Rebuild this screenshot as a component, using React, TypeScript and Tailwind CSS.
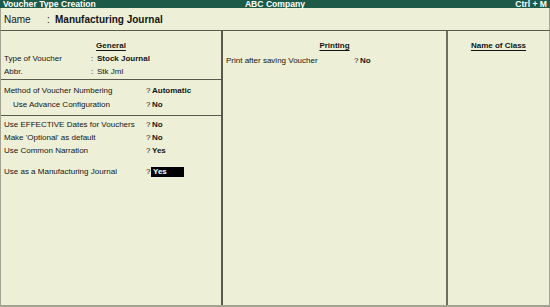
import React from 'react';

const font = { fontFamily: '"Liberation Sans", Arial, sans-serif' };

function Row({
  label,
  sep,
  value,
  bold = false,
  labelW = 'w-[145px]',
  indent = false,
  highlight = false,
  className = '',
}: {
  label: string;
  sep: string;
  value: string;
  bold?: boolean;
  labelW?: string;
  indent?: boolean;
  highlight?: boolean;
  className?: string;
}) {
  return (
    <div className={`flex h-[13px] items-center text-[8px] leading-[13px] text-[#141414] ${className}`}>
      <span className={`${labelW} shrink-0 ${indent ? 'pl-[12px]' : 'pl-[3px]'}`}>{label}</span>
      <span className="w-[6px] shrink-0">{sep}</span>
      {highlight ? (
        <span className="-ml-[1px] flex h-[10px] w-[33px] items-center bg-black pl-[2px] font-bold leading-[10px] text-white">
          {value}
        </span>
      ) : (
        <span className={bold ? 'font-bold' : ''}>{value}</span>
      )}
    </div>
  );
}

function Heading({ children }: { children: React.ReactNode }) {
  return (
    <div className="mt-[8px] flex h-[13px] items-center justify-center text-[8px] font-bold leading-[13px] text-[#141414]">
      <span className="underline decoration-1 underline-offset-[2px]">{children}</span>
    </div>
  );
}

export default function App() {
  return (
    <div style={font} className="flex h-[307px] w-[550px] flex-col overflow-hidden bg-[#edf0d6]">
      {/* Title bar */}
      <div className="flex h-[8px] items-center justify-between bg-[#1d5a48] px-[3px] text-[8.6px] font-bold leading-[8px] text-white">
        <span className="w-[150px]">Voucher Type Creation</span>
        <span>ABC Company</span>
        <span className="w-[150px] text-right">Ctrl + M</span>
      </div>

      {/* Name */}
      <div className="flex h-[22px] items-center border-x border-[#a3a392] text-[#141414]">
        <span className="w-[46px] pl-[3px] text-[10px]">Name</span>
        <span className="w-[8px] text-[10px]">:</span>
        <span className="text-[10px] font-bold">Manufacturing Journal</span>
      </div>

      {/* Body */}
      <div className="flex flex-1 border-t border-b-2 border-x border-t-[#5a5a4c] border-b-[#a3a392] border-x-[#a3a392]">
        {/* General */}
        <div className="flex w-[222px] shrink-0 flex-col border-r-2 border-[#5a5a4c]">
          <Heading>General</Heading>
          <Row label="Type of Voucher" sep=":" value="Stock Journal" bold labelW="w-[90px]" />
          <Row label="Abbr." sep=":" value="Stk Jml" labelW="w-[90px]" />
          <div className="mt-[1px] border-t border-[#5a5a4c]" />
          <Row className="mt-[4px]" label="Method of Voucher Numbering" sep="?" value="Automatic" bold />
          <Row className="mt-[1px]" label="Use Advance Configuration" sep="?" value="No" bold indent />
          <div className="mt-[4px] border-t border-[#5a5a4c]" />
          <Row className="mt-[2px]" label="Use EFFECTIVE Dates for Vouchers" sep="?" value="No" bold />
          <Row label="Make 'Optional' as default" sep="?" value="No" bold />
          <Row label="Use Common Narration" sep="?" value="Yes" bold />
          <Row className="mt-[8px]" label="Use as a Manufacturing Journal" sep="?" value="Yes" highlight />
        </div>

        {/* Printing */}
        <div className="flex w-[225px] shrink-0 flex-col border-r-2 border-r-[#6e6e60]">
          <Heading>Printing</Heading>
          <Row className="mt-[2px]" label="Print after saving Voucher" sep="?" value="No" bold labelW="w-[131px]" />
        </div>

        {/* Name of Class */}
        <div className="flex flex-1 flex-col">
          <Heading>Name of Class</Heading>
        </div>
      </div>
    </div>
  );
}
